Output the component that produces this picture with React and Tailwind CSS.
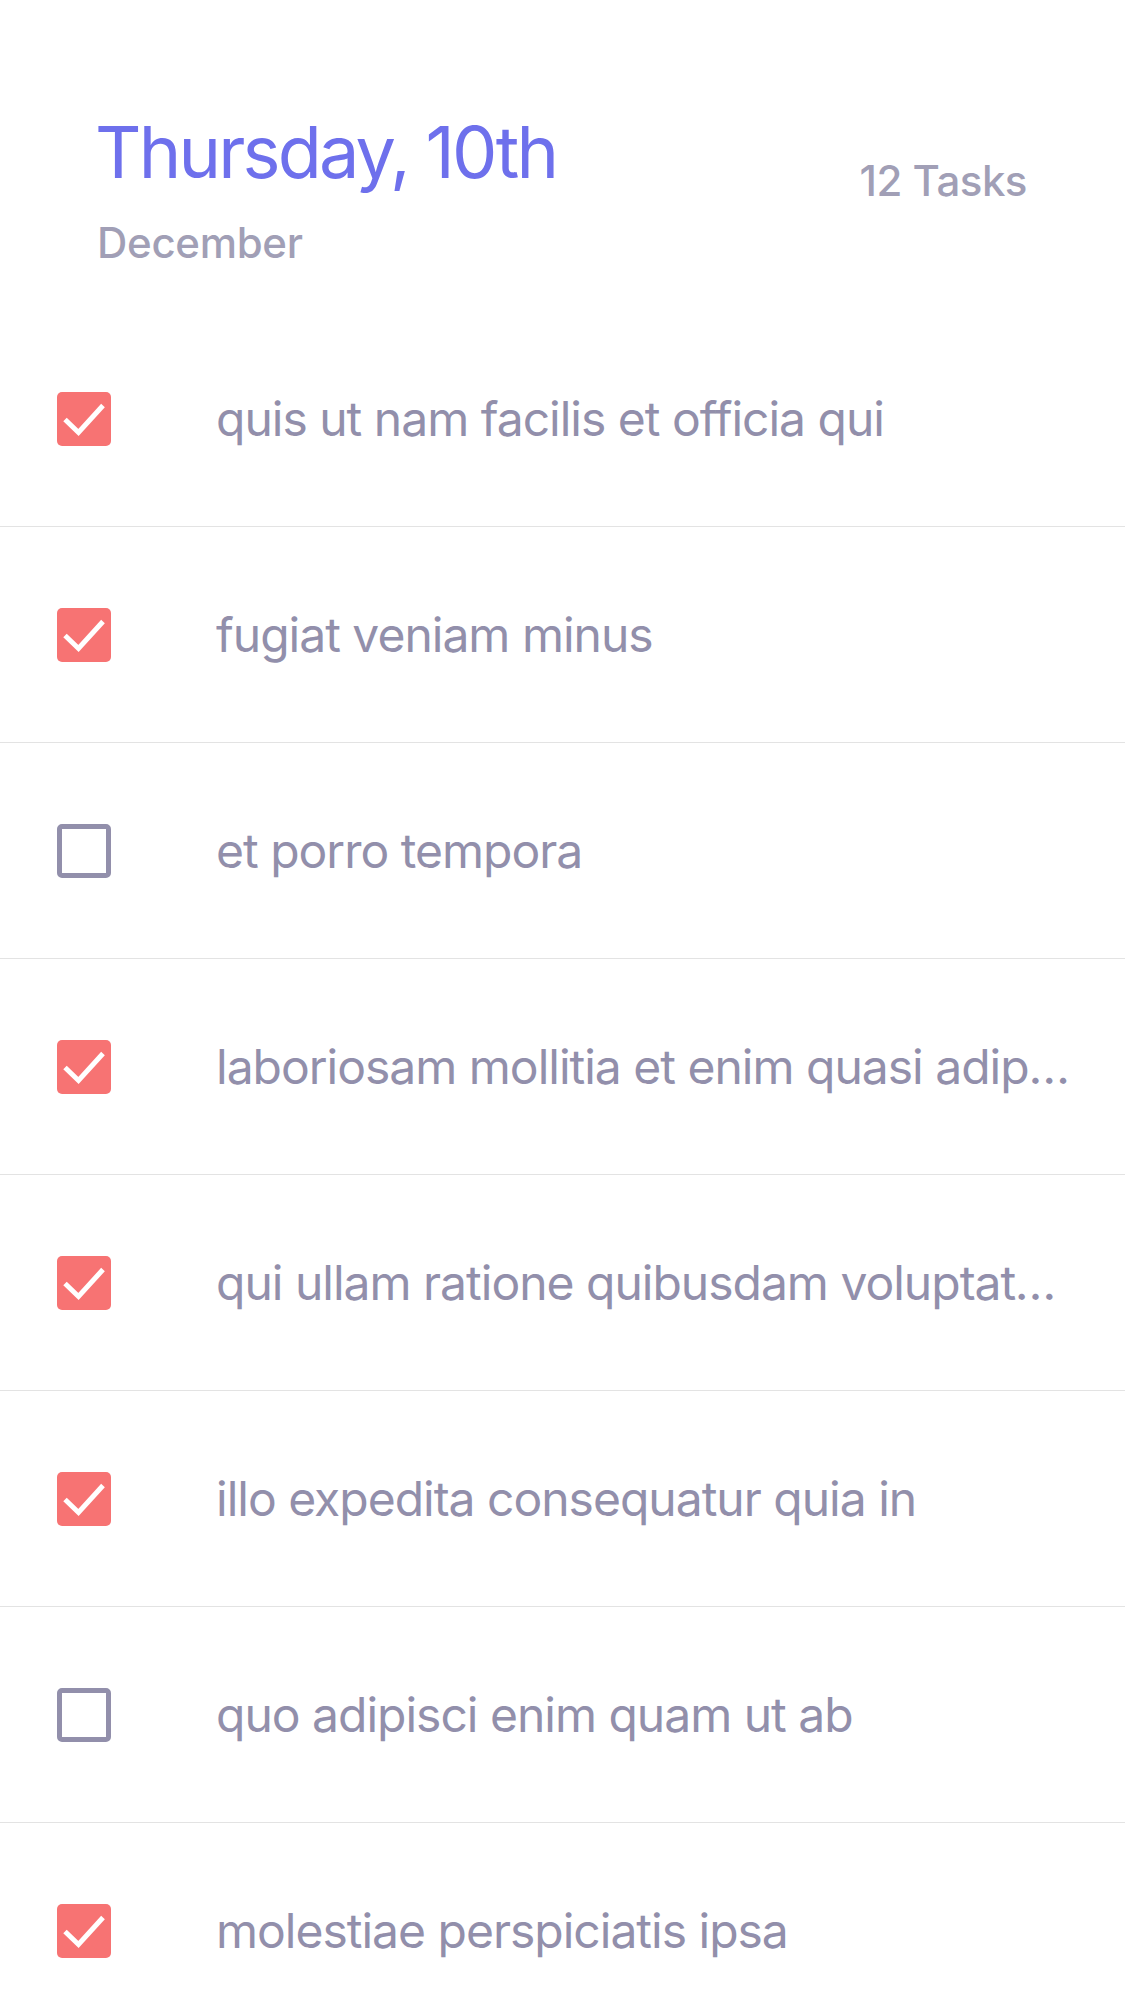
import React from "react";

const tasks = [
  { text: "quis ut nam facilis et officia qui", done: true },
  { text: "fugiat veniam minus", done: true },
  { text: "et porro tempora", done: false },
  { text: "laboriosam mollitia et enim quasi adipisci quia provident illum", done: true },
  { text: "qui ullam ratione quibusdam voluptatem quia omnis", done: true },
  { text: "illo expedita consequatur quia in", done: true },
  { text: "quo adipisci enim quam ut ab", done: false },
  { text: "molestiae perspiciatis ipsa", done: true },
];

function Check({ done }) {
  if (done) {
    return (
      <div className="w-[54px] h-[54px] shrink-0 rounded-[5px] bg-[#f77373] flex items-center justify-center">
        <svg width="54" height="54" viewBox="0 0 54 54">
          <polyline points="8,27.5 21.5,40.5 46,13.5" fill="none" stroke="#ffffff" strokeWidth="5" strokeLinecap="butt" strokeLinejoin="miter" />
        </svg>
      </div>
    );
  }
  return <div className="w-[54px] h-[54px] shrink-0 rounded-[5px] border-[5px] border-[#928fab] bg-white" />;
}

export default function App() {
  return (
    <div className="w-[1125px] h-[2001px] overflow-hidden bg-white" style={{ fontFamily: "Inter, 'Noto Sans', sans-serif" }}>
      <div className="h-[311px] pt-[116px] pl-[97px] pr-[98px] flex items-start justify-between">
        <div>
          <div className="-ml-[2px] text-[72px] leading-[72px] text-[#6e70ec] tracking-[-2.8px]">Thursday, 10th</div>
          <div className="mt-[34px] text-[42px] leading-[42px] text-[#a19fb6] font-medium tracking-[-0.3px]">December</div>
        </div>
        <div className="mt-[44px] text-[42px] leading-[42px] text-[#a19fb6] font-medium tracking-[-0.5px]">12 Tasks</div>
      </div>
      <div>
        {tasks.map((t, i) => (
          <div key={i} className="h-[216px] border-b border-[#e3e3e3] flex items-center pl-[57px] pr-[50px]">
            <Check done={t.done} />
            <div className="ml-[105px] min-w-0 flex-1 truncate text-[48px] leading-[58px] text-[#928fab] tracking-[-1px]">{t.text}</div>
          </div>
        ))}
      </div>
    </div>
  );
}
